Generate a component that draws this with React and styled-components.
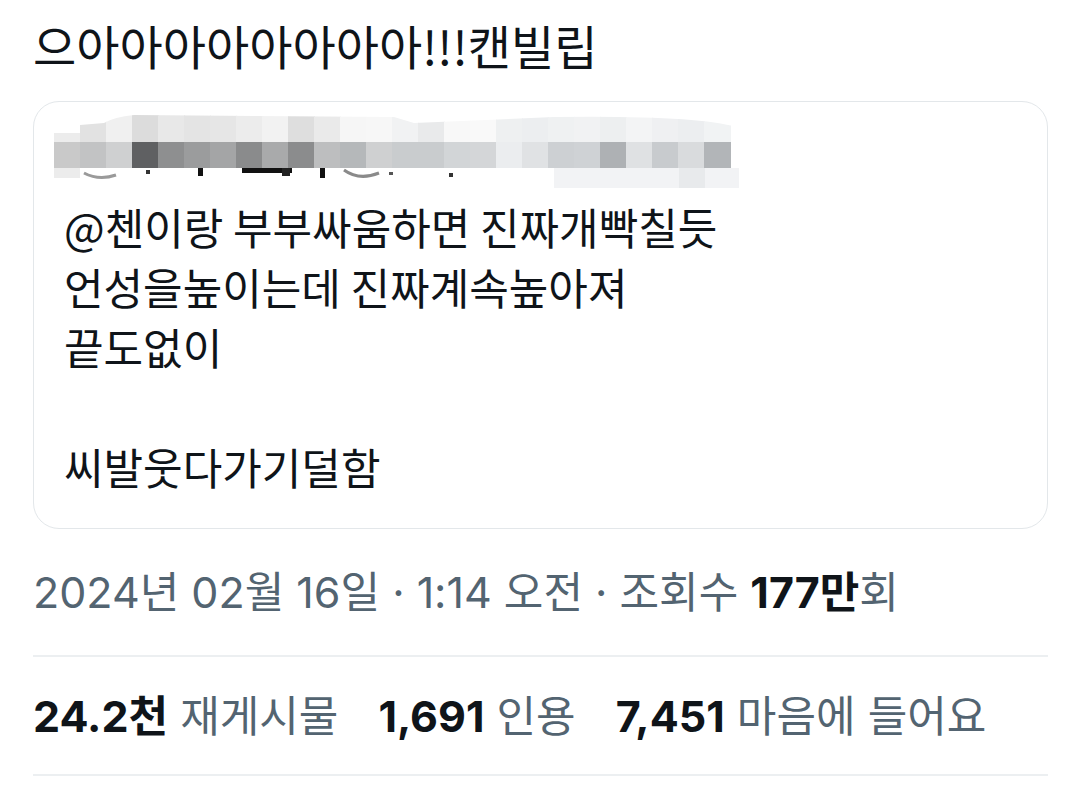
import styled, { createGlobalStyle } from 'styled-components';

const GlobalStyle = createGlobalStyle`
  html, body {
    margin: 0;
    padding: 0;
    background: #ffffff;
  }
  body {
    font-family: "Inter", "Noto Sans CJK KR", sans-serif;
    color: #0f1419;
  }
`;

const Page = styled.div`
  width: 1080px;
  height: 799px;
  box-sizing: border-box;
  padding: 0 32px 0 33px;
  overflow: hidden;
`;

const Title = styled.h1`
  margin: 15px 0 0;
  font-family: "Noto Sans CJK KR", sans-serif;
  font-size: 47px;
  font-weight: 400;
  line-height: 60px;
  color: #0f1419;
`;

const QuoteCard = styled.div`
  margin-top: 26px;
  border: 1.5px solid #e3e7ea;
  border-radius: 26px;
  padding: 13px 30px 32px 30px;
`;

const QuoteBody = styled.p`
  margin: 5px 0 0;
  font-family: "Noto Sans CJK KR", sans-serif;
  font-size: 43px;
  line-height: 60px;
  color: #0f1419;
  white-space: pre-line;
`;

const MetaLine = styled.div`
  margin-top: 33px;
  font-size: 43px;
  line-height: 60px;
  color: #536471;
`;

const Strong = styled.b`
  font-weight: 700;
  color: #0f1419;
`;

const Divider = styled.hr`
  margin: ${(p) => p.$top}px 0 0;
  border: none;
  height: 2px;
  background: #eceff1;
`;

const StatsRow = styled.div`
  margin-top: 29px;
  display: flex;
  gap: 40px;
  font-size: 43px;
  line-height: 60px;
`;

const Stat = styled.span`
  color: #536471;
`;

// pixelated (censored) author line
const midRow = [
  '#c9c9c9', '#c2c3c4', '#cfd0d1', '#5f6062', '#8e8f90', '#9b9c9d', '#a4a5a6',
  '#8a8b8c', '#a9aaab', '#8b8c8d', '#bdbebf', '#b5b8ba', '#cfd0d1', '#c9ccce',
  '#c9ccce', '#d2d5d7', '#d4d6d8', '#ebedef', '#e0e2e4', '#cdd0d3', '#cfd2d5',
  '#aeb1b4', '#dfe1e3', '#c8cbce', '#d9dbdd', '#b2b5b8',
];
const topRow = [
  '#ececec', '#e2e2e2', '#f0f0f0', '#dcdcdc', '#e8e8e8', '#e4e4e4', '#e6e6e6',
  '#ececec', '#f2f2f2', '#dedede', '#eaeaea', '#f6f6f6', '#f7f7f7', '#f1f2f3',
  '#e9eaeb', '#f8f8f8', '#f9f9f9', '#eef0f1', '#eceef0', '#eff1f2', '#f1f2f3',
  '#edeff0', '#f3f4f5', '#eff0f2', '#eceef0', '#f1f3f4',
];

const Mosaic = () => (
  <svg width="690" height="76" viewBox="0 0 690 76" style={{ display: 'block', marginLeft: -10 }}>
    <defs>
      <clipPath id="topClip">
        <path d="M0 18 L26 18 L26 10 L50 8 Q60 2 80 0 L340 2 L360 8 L500 2 Q640 0 683 12 L683 28 L0 28 Z" />
      </clipPath>
    </defs>
    <g clipPath="url(#topClip)">
      {topRow.map((c, i) => (
        <rect key={i} x={i * 26} y={0} width={27} height={28} fill={c} />
      ))}
    </g>
    {midRow.map((c, i) => (
      <rect key={i} x={i * 26} y={27} width={27} height={26} fill={c} />
    ))}
    <rect x="0" y="53" width="26" height="10" fill="#ececec" />
    <rect x="500" y="53" width="185" height="20" fill="#f2f3f5" />
    <rect x="625" y="53" width="26" height="20" fill="#e8eaec" />
    <path d="M30 58 Q45 66 62 60" stroke="#9a9a9a" strokeWidth="3" fill="none" />
    <rect x="92" y="55" width="4" height="4" fill="#333" />
    <rect x="144" y="53" width="5" height="8" fill="#111" />
    <rect x="188" y="53" width="50" height="5" fill="#111" />
    <rect x="228" y="53" width="8" height="8" fill="#222" />
    <rect x="266" y="53" width="5" height="10" fill="#111" />
    <path d="M290 55 Q305 66 325 58" stroke="#8a8a8a" strokeWidth="3" fill="none" />
    <rect x="335" y="57" width="4" height="3" fill="#555" />
    <rect x="395" y="58" width="4" height="4" fill="#333" />
  </svg>
);

const App = () => {
  return (
    <>
      <GlobalStyle />
      <Page>
        <Title>으아아아아아아아아!!!캔빌립</Title>
        <QuoteCard>
          <Mosaic />
          <QuoteBody>
            {'@첸이랑 부부싸움하면 진짜개빡칠듯\n언성을높이는데 진짜계속높아져\n끝도없이\n\u00a0\n씨발웃다가기덜함'}
          </QuoteBody>
        </QuoteCard>
        <MetaLine>
          2024년 02월 16일 · 1:14 오전 · 조회수 <Strong>177만</Strong>회
        </MetaLine>
        <Divider $top={33} />
        <StatsRow>
          <span>
            <Strong>24.2천</Strong> <Stat>재게시물</Stat>
          </span>
          <span>
            <Strong>1,691</Strong> <Stat>인용</Stat>
          </span>
          <span>
            <Strong>7,451</Strong> <Stat>마음에 들어요</Stat>
          </span>
        </StatsRow>
        <Divider $top={28} />
      </Page>
    </>
  );
};

export default App;
